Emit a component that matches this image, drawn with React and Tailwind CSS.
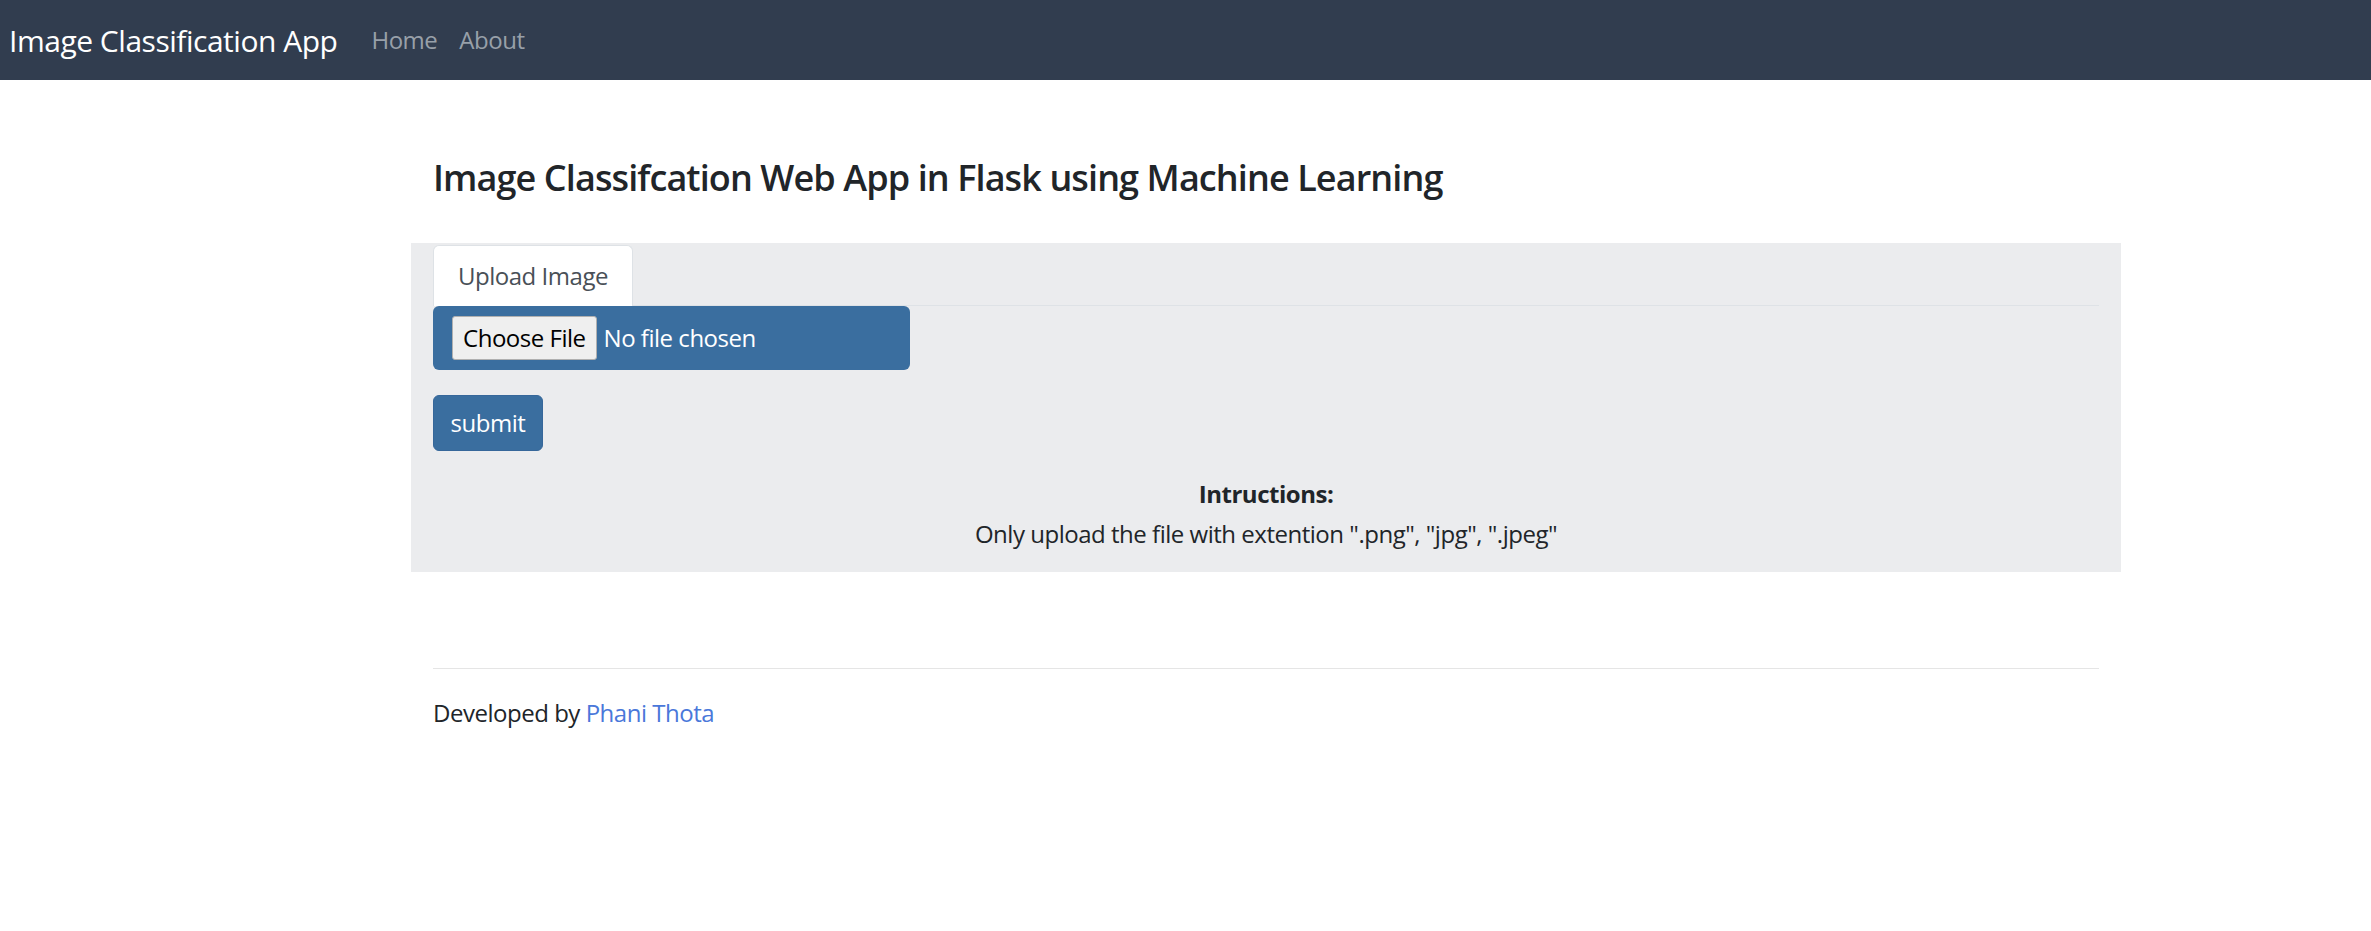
export default function App() {
  return (
    <div className="min-h-screen bg-white text-[#212529] font-['Open_Sans',sans-serif] text-[24px] leading-[1.5] tracking-[-0.02em]">
      {/* NAVBAR */}
      <nav className="h-[80px] bg-[#313d4f] flex items-center px-[9px]">
        <span className="text-[30px] text-white mr-[22px]">Image Classification App</span>
        <a href="#" className="px-[12px] text-[#98a0a9]">Home</a>
        <a href="#" className="px-[10px] text-[#98a0a9]">About</a>
      </nav>

      <div className="ml-[411px] w-[1710px]">
        <h4 className="px-[22px] mt-[76px] mb-[44px] text-[36px] font-semibold leading-[1.2] tracking-[-0.025em]">
          Image Classifcation Web App in Flask using Machine Learning
        </h4>

        {/* PANEL */}
        <div className="bg-[#ebecee] px-[22px] pt-[2px] pb-[20px]">
          <div className="flex border-b border-[#dee2e6]">
            <div className="bg-white border border-[#dee2e6] border-b-0 rounded-t-[6px] px-[24px] py-[12px] text-[#495057] -mb-[1px]">
              Upload Image
            </div>
          </div>

          <div className="w-[477px] h-[64px] bg-[#3a6e9f] rounded-[6px] flex items-center pl-[19px] gap-[7px]">
            <button className="bg-[#efefef] text-black border border-[#b0b0b0] rounded-[3px] px-[10px] h-[44px] leading-none">
              Choose File
            </button>
            <span className="text-white">No file chosen</span>
          </div>

          <button className="mt-[25px] w-[110px] h-[56px] bg-[#3a6e9f] text-white rounded-[6px] border border-[#36679a]">
            submit
          </button>

          <div className="mt-[25px] text-center">
            <div className="font-bold">Intructions:</div>
            <div className="mt-[4px]">Only upload the file with extention ".png", "jpg", ".jpeg"</div>
          </div>
        </div>

        {/* FOOTER */}
        <div className="px-[22px] mt-[96px]">
          <hr className="border-t border-[#e5e5e5]" />
          <p className="mt-[26px]">
            Developed by <a href="#" className="text-[#4a78da]">Phani Thota</a>
          </p>
        </div>
      </div>
    </div>
  );
}
